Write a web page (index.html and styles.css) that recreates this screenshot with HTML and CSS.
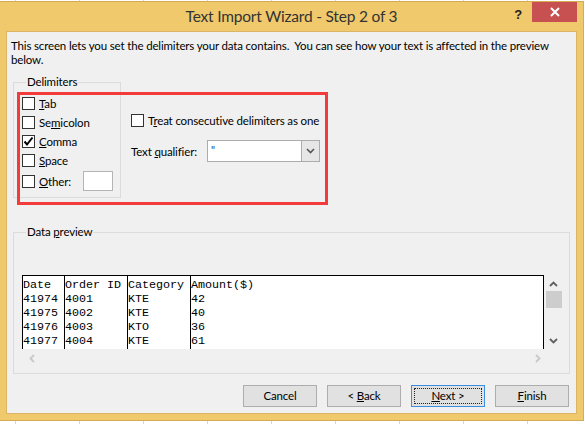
FILE: index.html
```html
<!DOCTYPE html>
<html>
<head>
<meta charset="utf-8">
<title>Text Import Wizard - Step 2 of 3</title>
<link rel="stylesheet" href="styles.css">
</head>
<body>
<div class="dialog">
  <div class="titlebar">
    <div class="title">Text Import Wizard - Step 2 of 3</div>
    <div class="controls">
      <span class="help">?</span>
      <span class="close"><svg width="10" height="10" viewBox="0 0 10 10"><path d="M1 1L9 9M9 1L1 9" stroke="#fff" stroke-width="2" fill="none"/></svg></span>
    </div>
  </div>
  <div class="client">
    <p class="intro">This screen lets you set the delimiters your data contains.&nbsp; You can see how your text is affected in the preview<br>below.</p>

    <div class="options-row">
      <div class="group delimiters">
        <span class="group-label">Delimiters</span>
        <div class="checks">
          <div class="check"><span class="box"></span><span><u>T</u>ab</span></div>
          <div class="check"><span class="box"></span><span>Se<u>m</u>icolon</span></div>
          <div class="check"><span class="box"><svg width="11" height="11" viewBox="0 0 11 11"><path d="M1.5 5.5L4 8.5L9.5 1.5" stroke="#000" stroke-width="2" fill="none"/></svg></span><span><u>C</u>omma</span></div>
          <div class="check"><span class="box"></span><span><u>S</u>pace</span></div>
          <div class="check other"><span class="box"></span><span><u>O</u>ther:</span><span class="textbox"></span></div>
        </div>
      </div>
      <div class="side">
        <div class="check"><span class="box"></span><span>T<u>r</u>eat consecutive delimiters as one</span></div>
        <div class="qualifier">
          <span class="q-label">Text <u>q</u>ualifier:</span>
          <div class="combo">
            <span class="combo-value">"</span>
            <span class="combo-btn"><svg width="9" height="6" viewBox="0 0 9 6"><path d="M1 1L4.5 4.5L8 1" stroke="#555" stroke-width="1.6" fill="none"/></svg></span>
          </div>
        </div>
      </div>
    </div>

    <div class="group preview">
      <span class="group-label">Data <u>p</u>review</span>
      <div class="preview-ctl">
        <div class="data">
          <div class="col c1">Date
41974
41975
41976
41977</div>
          <div class="col c2">Order ID
4001
4002
4003
4004</div>
          <div class="col c3">Category
KTE
KTE
KTO
KTE</div>
          <div class="col c4">Amount($)
42
40
36
61</div>
        </div>
        <div class="vscroll">
          <svg class="arrow" width="9" height="6" viewBox="0 0 9 6"><path d="M1 5L4.5 1.5L8 5" stroke="#606060" stroke-width="1.8" fill="none"/></svg>
          <span class="thumb"></span>
          <span class="spacer"></span>
          <svg class="arrow" width="9" height="6" viewBox="0 0 9 6"><path d="M1 1L4.5 4.5L8 1" stroke="#606060" stroke-width="1.8" fill="none"/></svg>
        </div>
        <div class="hscroll">
          <svg width="6" height="9" viewBox="0 0 6 9"><path d="M5 1L1.5 4.5L5 8" stroke="#c9c9c9" stroke-width="1.8" fill="none"/></svg>
          <svg width="6" height="9" viewBox="0 0 6 9"><path d="M1 1L4.5 4.5L1 8" stroke="#c9c9c9" stroke-width="1.8" fill="none"/></svg>
        </div>
      </div>
    </div>

    <div class="buttons">
      <button class="btn"><span class="btn-in">Cancel</span></button>
      <button class="btn"><span class="btn-in">&lt; <u>B</u>ack</span></button>
      <button class="btn default"><span class="btn-in"><u>N</u>ext &gt;</span></button>
      <button class="btn"><span class="btn-in"><u>F</u>inish</span></button>
    </div>

    <div class="annotation"></div>
  </div>
</div>
</body>
</html>
```
FILE: styles.css
```css
* { box-sizing: border-box; }
html, body { margin: 0; }
body {
  width: 585px;
  height: 424px;
  overflow: hidden;
  padding-top: 1px;
  background: #fff repeating-linear-gradient(90deg, transparent 0 15px, #d6d6d6 15px 16px, transparent 16px 64px);
  font-family: Lato, "Liberation Sans", sans-serif;
  font-size: 11.5px;
  letter-spacing: -0.15px;
  color: #000;
}
u { text-decoration: underline; text-underline-offset: 1px; }

.dialog {
  width: 584px;
  height: 420px;
  background: #f0c96c;
  border: 1px solid #d5ab55;
  border-left: 0;
  display: flex;
  flex-direction: column;
  padding: 0 6px 6px 6px;
}

.titlebar {
  height: 29px;
  margin: 0 -6px;
  display: grid;
}
.title, .controls { grid-area: 1 / 1; }
.title {
  text-align: center;
  font-size: 15.5px;
  letter-spacing: -0.2px;
  line-height: 29px;
  color: #333;
}
.controls {
  justify-self: end;
  display: flex;
  align-items: flex-start;
  padding-right: 6px;
}
.help {
  font-family: "Liberation Sans", sans-serif;
  font-weight: bold;
  font-size: 13px;
  line-height: 1;
  color: #222;
  margin-top: 6px;
  margin-right: 10px;
}
.close {
  width: 45px;
  height: 20px;
  background: #c75050;
  display: flex;
  align-items: center;
  justify-content: center;
}

.client {
  flex: 1;
  position: relative;
  background: #f0f0f0;
  border: 1px solid #d9b565;
  display: flex;
  flex-direction: column;
}
.intro {
  margin: 7px 4px 0 4px;
  line-height: 14px;
  white-space: nowrap;
}

.options-row {
  display: flex;
  align-items: flex-start;
  margin: 15px 0 0 6px;
}

.group {
  border: 1px solid #dcdcdc;
}
.group-label {
  display: block;
  width: max-content;
  margin: -9px 0 0 4px;
  padding: 0 1px;
  line-height: 15px;
  background: #f0f0f0;
}

.delimiters {
  width: 108px;
  padding: 0 7px 5px 8px;
}
.checks { padding-top: 5px; }
.check {
  display: flex;
  align-items: center;
  gap: 4px;
  height: 19px;
}
.check.other { height: 22px; }
.box {
  flex: none;
  width: 13px;
  height: 13px;
  border: 1px solid #333;
  background: #fff;
  display: flex;
  align-items: center;
  justify-content: center;
}
.textbox {
  margin-left: auto;
  width: 30px;
  height: 20px;
  border: 1px solid #b4b4b4;
  background: #fff;
}

.side {
  margin: 29px 0 0 10px;
}
.qualifier {
  display: flex;
  align-items: center;
  height: 22px;
  margin-top: 10px;
}
.q-label { width: 76px; }
.combo {
  width: 113px;
  height: 22px;
  border: 1px solid #acacac;
  background: #fff;
  display: flex;
}
.combo-value {
  flex: 1;
  padding-left: 3px;
  line-height: 18px;
  font-size: 11px;
  color: #1a3c8c;
}
.combo-btn {
  width: 18px;
  border-left: 1px solid #acacac;
  background: #e6e6e6;
  display: flex;
  align-items: center;
  justify-content: center;
}

.preview {
  margin: 34px 6px 0 6px;
  padding: 0 7px 8px 8px;
}
.preview-ctl {
  margin-top: 36px;
  display: grid;
  grid-template-columns: 522px 18px;
  grid-template-rows: 74px 16px;
}
.data {
  display: flex;
  background: #fff;
  border-top: 1px solid #000;
  border-right: 1px solid #000;
  overflow: hidden;
}
.col {
  border-left: 1px solid #000;
  padding-top: 2px;
  font-family: "Liberation Mono", monospace;
  font-size: 11.7px;
  letter-spacing: 0;
  line-height: 14px;
  white-space: pre;
}
.c1 { width: 42px; }
.c2, .c3 { width: 63px; }
.c4 { flex: 1; }

.vscroll {
  display: flex;
  flex-direction: column;
  align-items: center;
  padding: 6px 0 5px 1px;
}
.thumb {
  width: 16px;
  height: 17px;
  background: #cdcdcd;
  margin-top: 4px;
}
.spacer { flex: 1; }
.hscroll {
  display: flex;
  justify-content: space-between;
  align-items: center;
  padding: 2px 3px 0 7px;
}

.buttons {
  display: flex;
  justify-content: flex-end;
  gap: 10px;
  margin-top: 11px;
  padding-right: 7px;
}
.btn {
  width: 74px;
  height: 22px;
  padding: 0;
  background: #e1e1e1;
  border: 1px solid #adadad;
  font: inherit;
  letter-spacing: inherit;
  color: #000;
  display: flex;
}
.btn-in {
  flex: 1;
  margin: 2px;
  border: 1px dotted transparent;
  line-height: 14px;
  text-align: center;
}
.btn.default { border-color: #3c8fe0; }
.btn.default .btn-in { border-color: #222; }

.annotation {
  position: absolute;
  left: 10px;
  top: 60px;
  width: 311px;
  height: 113px;
  border: 3px solid #f43b3b;
}
```
